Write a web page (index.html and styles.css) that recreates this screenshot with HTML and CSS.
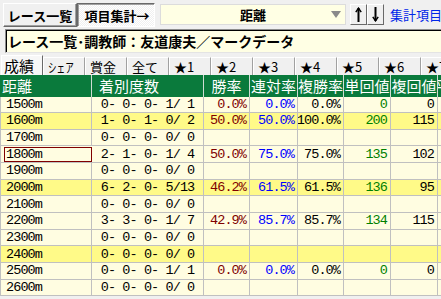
FILE: index.html
```html
<!DOCTYPE html>
<html lang="ja">
<head>
    <meta charset="UTF-8">
    <title>項目集計</title>
    <link rel="stylesheet" href="styles.css">
</head>
<body>
    <div class="toolbar">
        <button class="toolBtn">レース一覧</button>
        <button class="toolBtn toolBtn--down">項目集計→</button>
        <div class="combo">
            <span class="combo__text">距離</span>
            <span class="combo__arrow"></span>
        </div>
        <button class="sortBtn sortBtn--first"><svg width="7" height="15" viewBox="0 0 7 15"><path d="M0.8 5.2 L3.5 1.2 L6.2 5.2" fill="none" stroke="#000" stroke-width="1.5"/><rect x="2.5" y="1" width="2" height="14" fill="#000"/></svg></button>
        <button class="sortBtn"><svg width="7" height="15" viewBox="0 0 7 15"><path d="M0.8 9.8 L3.5 13.8 L6.2 9.8" fill="none" stroke="#000" stroke-width="1.5"/><rect x="2.5" y="0" width="2" height="14" fill="#000"/></svg></button>
        <a class="moreLink">集計項目&gt;&gt;</a>
    </div>

    <div class="caption">レース一覧･調教師：友道康夫／マークデータ</div>

    <ul class="tabs">
        <li class="tab tab--active">成績</li>
        <li class="tab"><span class="tab__narrow">シェア</span></li>
        <li class="tab">賞金</li>
        <li class="tab">全て</li>
        <li class="tab">★1</li>
        <li class="tab">★2</li>
        <li class="tab">★3</li>
        <li class="tab">★4</li>
        <li class="tab">★5</li>
        <li class="tab">★6</li>
        <li class="tab">★7</li>
    </ul>

    <div class="sheet">
        <div class="sheet__head">
            <div class="hcell hcell--left">距離</div>
            <div class="hcell hcell--count">着別度数</div>
            <div class="hcell">勝率</div>
            <div class="hcell">連対率</div>
            <div class="hcell">複勝率</div>
            <div class="hcell">単回値</div>
            <div class="hcell">複回値</div>
            <div class="hcell">平均着</div>
        </div>

        <div class="sheet__row">
            <div class="cell cell--dist">1500m</div><div class="cell cell--count">0- 0- 0- 1/ 1</div>
            <div class="cell win">0.0%</div><div class="cell ren">0.0%</div><div class="cell fuku">0.0%</div>
            <div class="cell tan">0</div><div class="cell fkv">0</div><div class="cell"></div>
        </div>
        <div class="sheet__row sheet__row--mark">
            <div class="cell cell--dist">1600m</div><div class="cell cell--count">1- 0- 1- 0/ 2</div>
            <div class="cell win">50.0%</div><div class="cell ren">50.0%</div><div class="cell fuku">100.0%</div>
            <div class="cell tan">200</div><div class="cell fkv">115</div><div class="cell"></div>
        </div>
        <div class="sheet__row">
            <div class="cell cell--dist">1700m</div><div class="cell cell--count">0- 0- 0- 0/ 0</div>
            <div class="cell"></div><div class="cell"></div><div class="cell"></div>
            <div class="cell"></div><div class="cell"></div><div class="cell"></div>
        </div>
        <div class="sheet__row">
            <div class="cell cell--dist cell--focus"><span>1800m</span></div><div class="cell cell--count">2- 1- 0- 1/ 4</div>
            <div class="cell win">50.0%</div><div class="cell ren">75.0%</div><div class="cell fuku">75.0%</div>
            <div class="cell tan">135</div><div class="cell fkv">102</div><div class="cell"></div>
        </div>
        <div class="sheet__row">
            <div class="cell cell--dist">1900m</div><div class="cell cell--count">0- 0- 0- 0/ 0</div>
            <div class="cell"></div><div class="cell"></div><div class="cell"></div>
            <div class="cell"></div><div class="cell"></div><div class="cell"></div>
        </div>
        <div class="sheet__row sheet__row--mark">
            <div class="cell cell--dist">2000m</div><div class="cell cell--count">6- 2- 0- 5/13</div>
            <div class="cell win">46.2%</div><div class="cell ren">61.5%</div><div class="cell fuku">61.5%</div>
            <div class="cell tan">136</div><div class="cell fkv">95</div><div class="cell"></div>
        </div>
        <div class="sheet__row">
            <div class="cell cell--dist">2100m</div><div class="cell cell--count">0- 0- 0- 0/ 0</div>
            <div class="cell"></div><div class="cell"></div><div class="cell"></div>
            <div class="cell"></div><div class="cell"></div><div class="cell"></div>
        </div>
        <div class="sheet__row">
            <div class="cell cell--dist">2200m</div><div class="cell cell--count">3- 3- 0- 1/ 7</div>
            <div class="cell win">42.9%</div><div class="cell ren">85.7%</div><div class="cell fuku">85.7%</div>
            <div class="cell tan">134</div><div class="cell fkv">115</div><div class="cell"></div>
        </div>
        <div class="sheet__row">
            <div class="cell cell--dist">2300m</div><div class="cell cell--count">0- 0- 0- 0/ 0</div>
            <div class="cell"></div><div class="cell"></div><div class="cell"></div>
            <div class="cell"></div><div class="cell"></div><div class="cell"></div>
        </div>
        <div class="sheet__row sheet__row--mark">
            <div class="cell cell--dist">2400m</div><div class="cell cell--count">0- 0- 0- 0/ 0</div>
            <div class="cell"></div><div class="cell"></div><div class="cell"></div>
            <div class="cell"></div><div class="cell"></div><div class="cell"></div>
        </div>
        <div class="sheet__row">
            <div class="cell cell--dist">2500m</div><div class="cell cell--count">0- 0- 0- 1/ 1</div>
            <div class="cell win">0.0%</div><div class="cell ren">0.0%</div><div class="cell fuku">0.0%</div>
            <div class="cell tan">0</div><div class="cell fkv">0</div><div class="cell"></div>
        </div>
        <div class="sheet__row">
            <div class="cell cell--dist">2600m</div><div class="cell cell--count">0- 0- 0- 0/ 0</div>
            <div class="cell"></div><div class="cell"></div><div class="cell"></div>
            <div class="cell"></div><div class="cell"></div><div class="cell"></div>
        </div>
    </div>
</body>
</html>
```

FILE: styles.css
```css
:root {--face: #f0f0f0;--cream: #fffde1;--mark: #fffa88;--grid: #c0c0c0;--head: #0a7a3c;}
html, body {margin: 0;padding: 0;}
body {width: 441px;height: 299px;overflow: hidden;background: var(--face);font-family: "Noto Sans CJK JP", sans-serif;color: #000;}
button {font: inherit;margin: 0;padding: 0;color: #000;}

.toolbar {display: flex;align-items: flex-start;height: 28px;padding: 3px 0 0 3px;box-sizing: border-box;white-space: nowrap;}
.toolbar > * {flex: none;}
.toolBtn {width: 74px;height: 24px;box-sizing: border-box;display: flex;align-items: center;justify-content: center;font-size: 13px;font-weight: bold;background: var(--face);border: 1px solid;border-color: #fff #696969 #696969 #fff;box-shadow: inset -1px -1px #a0a0a0;}
.toolBtn--down {width: 78px;padding-left: 2px;border-color: #696969 #fff #fff #696969;box-shadow: inset 1px 1px #a0a0a0;background: repeating-conic-gradient(#f0f0f0 0 25%, #fff 0 50%) 0 0/2px 2px;}
.combo {width: 186px;height: 21px;margin: 1px 0 0 5px;box-sizing: border-box;display: flex;align-items: center;background: #ffffe4;border: 1px solid #dcdcdc;}
.combo__text {font-size: 13px;font-weight: bold;padding-left: 79px;flex: 1;}
.combo__arrow {width: 0;height: 0;margin-right: 4px;border-left: 5px solid transparent;border-right: 5px solid transparent;border-top: 7px solid #8a8a8a;}
.sortBtn {width: 17px;height: 21px;margin-top: 1px;box-sizing: border-box;display: flex;align-items: center;justify-content: center;background: var(--face);border: 1px solid;border-color: #fff #696969 #696969 #fff;}
.sortBtn--first {margin-left: 4px;}
.moreLink {margin: 2px 0 0 6px;font-size: 13px;color: #0026e8;}

.caption {height: 24px;margin: 1px 0 0 5px;box-sizing: border-box;padding-left: 2px;display: flex;align-items: center;background: #ffffe4;font-size: 14px;font-weight: bold;white-space: nowrap;border-top: 1px solid #8c8c8c;border-left: 1px solid #8c8c8c;border-bottom: 1px solid #e4e4e4;box-shadow: inset 1px 1px #000;}

.tabs {display: flex;list-style: none;margin: 2px 0 0 0;padding: 0 0 0 1px;height: 20px;white-space: nowrap;}
.tab {width: 42px;flex: none;box-sizing: border-box;margin-top: 2px;padding: 0 0 0 5px;font-size: 13px;line-height: 17px;border-top: 1px solid #fff;border-right: 1px solid #a0a0a0;box-shadow: inset 1px 0 #fff;}
.tab__narrow {display: inline-block;transform: scaleX(0.66);transform-origin: left center;}
.tab--active {width: 42px;margin-top: 0;padding-left: 3px;font-size: 15px;line-height: 19px;background: #f7f7f7;border-right: 1px solid #696969;}

.sheet__head, .sheet__row {display: grid;grid-template-columns: 92px 112px 46px 48px 46px 47px 47px 40px;}
.sheet__head {height: 21.5px;background: var(--head);}
.hcell {box-sizing: border-box;display: flex;align-items: center;justify-content: center;font-size: 15px;color: #fff;white-space: nowrap;overflow: hidden;border-right: 1px solid #cfdcd3;}
.hcell--left {justify-content: flex-start;padding-left: 2px;}
.hcell--count {justify-content: flex-start;padding-left: 7px;}

.sheet__row {height: 16.667px;background: var(--cream);}
.sheet__row--mark {background: var(--mark);}
.cell {box-sizing: border-box;display: flex;align-items: center;justify-content: flex-end;padding-right: 3px;font-family: "Liberation Mono", "Noto Sans CJK JP", monospace;font-size: 13.5px;letter-spacing: -0.9px;white-space: pre;overflow: hidden;border-right: 1px solid var(--grid);border-bottom: 1px solid var(--grid);}
.cell--dist {justify-content: flex-start;padding-left: 5px;border-left: 1px solid var(--grid);}
.cell--count {justify-content: center;padding-right: 0;}
.cell--focus {padding: 1px 0 0 3px;border-right: none;}
.cell--focus span {display: flex;align-items: center;width: 100%;height: 100%;box-sizing: border-box;padding-left: 1px;border: 1px solid #800000;}
.win {color: #800000;}
.ren {color: #0000ff;}
.fuku {color: #000;}
.tan {color: #008000;}
.fkv {color: #000;}
```
